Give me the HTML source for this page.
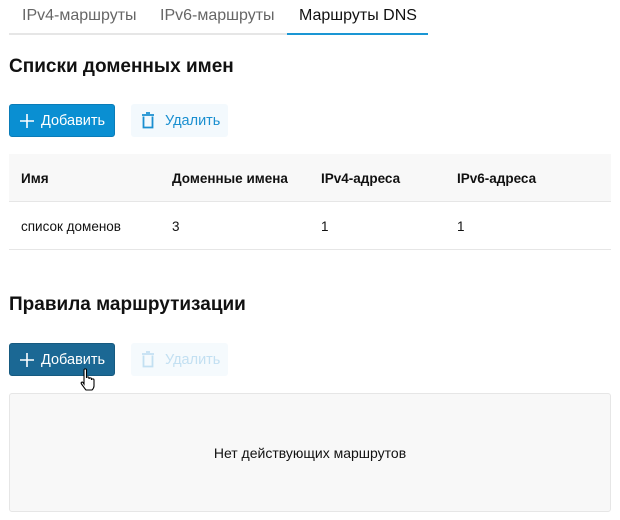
<!DOCTYPE html><html><head><meta charset="utf-8"><style>
*{box-sizing:border-box;margin:0;padding:0}
body{width:620px;height:520px;background:#fff;font-family:"Liberation Sans","Noto Sans CJK SC",sans-serif;color:#111;position:relative;overflow:hidden}
.a{position:absolute}
.tab{font-size:16px;color:#666;top:7px}
.h{font-size:19px;font-weight:bold;left:9px}
.btn{height:33px;border-radius:3px;font-size:14.5px;display:flex;align-items:center}
.th{font-size:13.5px;font-weight:bold;top:171px}
.td{font-size:13.5px;top:219px}
</style></head><body>
<div class="a tab" style="left:22px">IPv4-маршруты</div>
<div class="a tab" style="left:160px">IPv6-маршруты</div>
<div class="a tab" style="left:299px;color:#111">Маршруты DNS</div>
<div class="a" style="left:9px;top:33px;width:278px;height:2px;background:#e6e6e6"></div>
<div class="a" style="left:287px;top:33px;width:141px;height:2px;background:#1a96d4"></div>

<div class="a h" style="top:56px">Списки доменных имен</div>
<div class="a btn" style="left:9px;top:104px;width:106px;background:#0a8fd2;color:#fff;border:1px solid #0a7cb8">
<svg width="16" height="16" style="margin:0 6px 0 9px" viewBox="0 0 16 16"><path d="M8 1v14M1 8h14" stroke="#fff" stroke-width="1.6"/></svg>Добавить</div>
<div class="a btn" style="left:131px;top:104px;width:97px;background:#f3f9fd;color:#1a8fd0">
<svg width="14" height="17" style="margin:0 10px 0 10px" viewBox="0 0 14 17"><path d="M1 3h12M5 1h4M2.5 4.5v11h9v-11" stroke="#1a8fd0" stroke-width="1.8" fill="none"/></svg>Удалить</div>

<div class="a" style="left:9px;top:154px;width:602px;height:48px;background:#f8f8f8;border-bottom:1px solid #e6e6e6"></div>
<div class="a" style="left:9px;top:249px;width:602px;height:1px;background:#e6e6e6"></div>
<div class="a th" style="left:21px">Имя</div>
<div class="a th" style="left:172px">Доменные имена</div>
<div class="a th" style="left:321px">IPv4-адреса</div>
<div class="a th" style="left:457px">IPv6-адреса</div>
<div class="a td" style="left:21px">список доменов</div>
<div class="a td" style="left:172px">3</div>
<div class="a td" style="left:321px">1</div>
<div class="a td" style="left:457px">1</div>

<div class="a h" style="top:294px">Правила маршрутизации</div>
<div class="a btn" style="left:9px;top:343px;width:106px;background:#1b6894;color:#fff;border:1px solid #165a80">
<svg width="16" height="16" style="margin:0 6px 0 9px" viewBox="0 0 16 16"><path d="M8 1v14M1 8h14" stroke="#fff" stroke-width="1.6"/></svg>Добавить</div>
<div class="a btn" style="left:131px;top:343px;width:97px;background:#f5fafd;color:#c3e0f2">
<svg width="14" height="17" style="margin:0 10px 0 10px" viewBox="0 0 14 17"><path d="M1 3h12M5 1h4M2.5 4.5v11h9v-11" stroke="#c3e0f2" stroke-width="1.8" fill="none"/></svg>Удалить</div>
<svg class="a" style="left:80px;top:368px" width="18" height="24" viewBox="0 0 18 24"><path d="M4 2c0-1.5 2.5-1.5 2.5 0v8c0-1.5 2.5-1.5 2.5 0v1c0-1.5 2.5-1.5 2.5 0v1c0-1.5 2.5-1.5 2.5 0v6c0 2-1 3-2 4H6c-1-1-3-4-4.5-6-1-1.5 0.5-2.5 1.5-1.5L4 16z" fill="#fff" stroke="#000" stroke-width="1.1"/></svg>

<div class="a" style="left:9px;top:393px;width:602px;height:119px;background:#f8f8f8;border:1px solid #e6e6e6;border-radius:3px;display:flex;align-items:center;justify-content:center;font-size:14px">Нет действующих маршрутов</div>
</body></html>
